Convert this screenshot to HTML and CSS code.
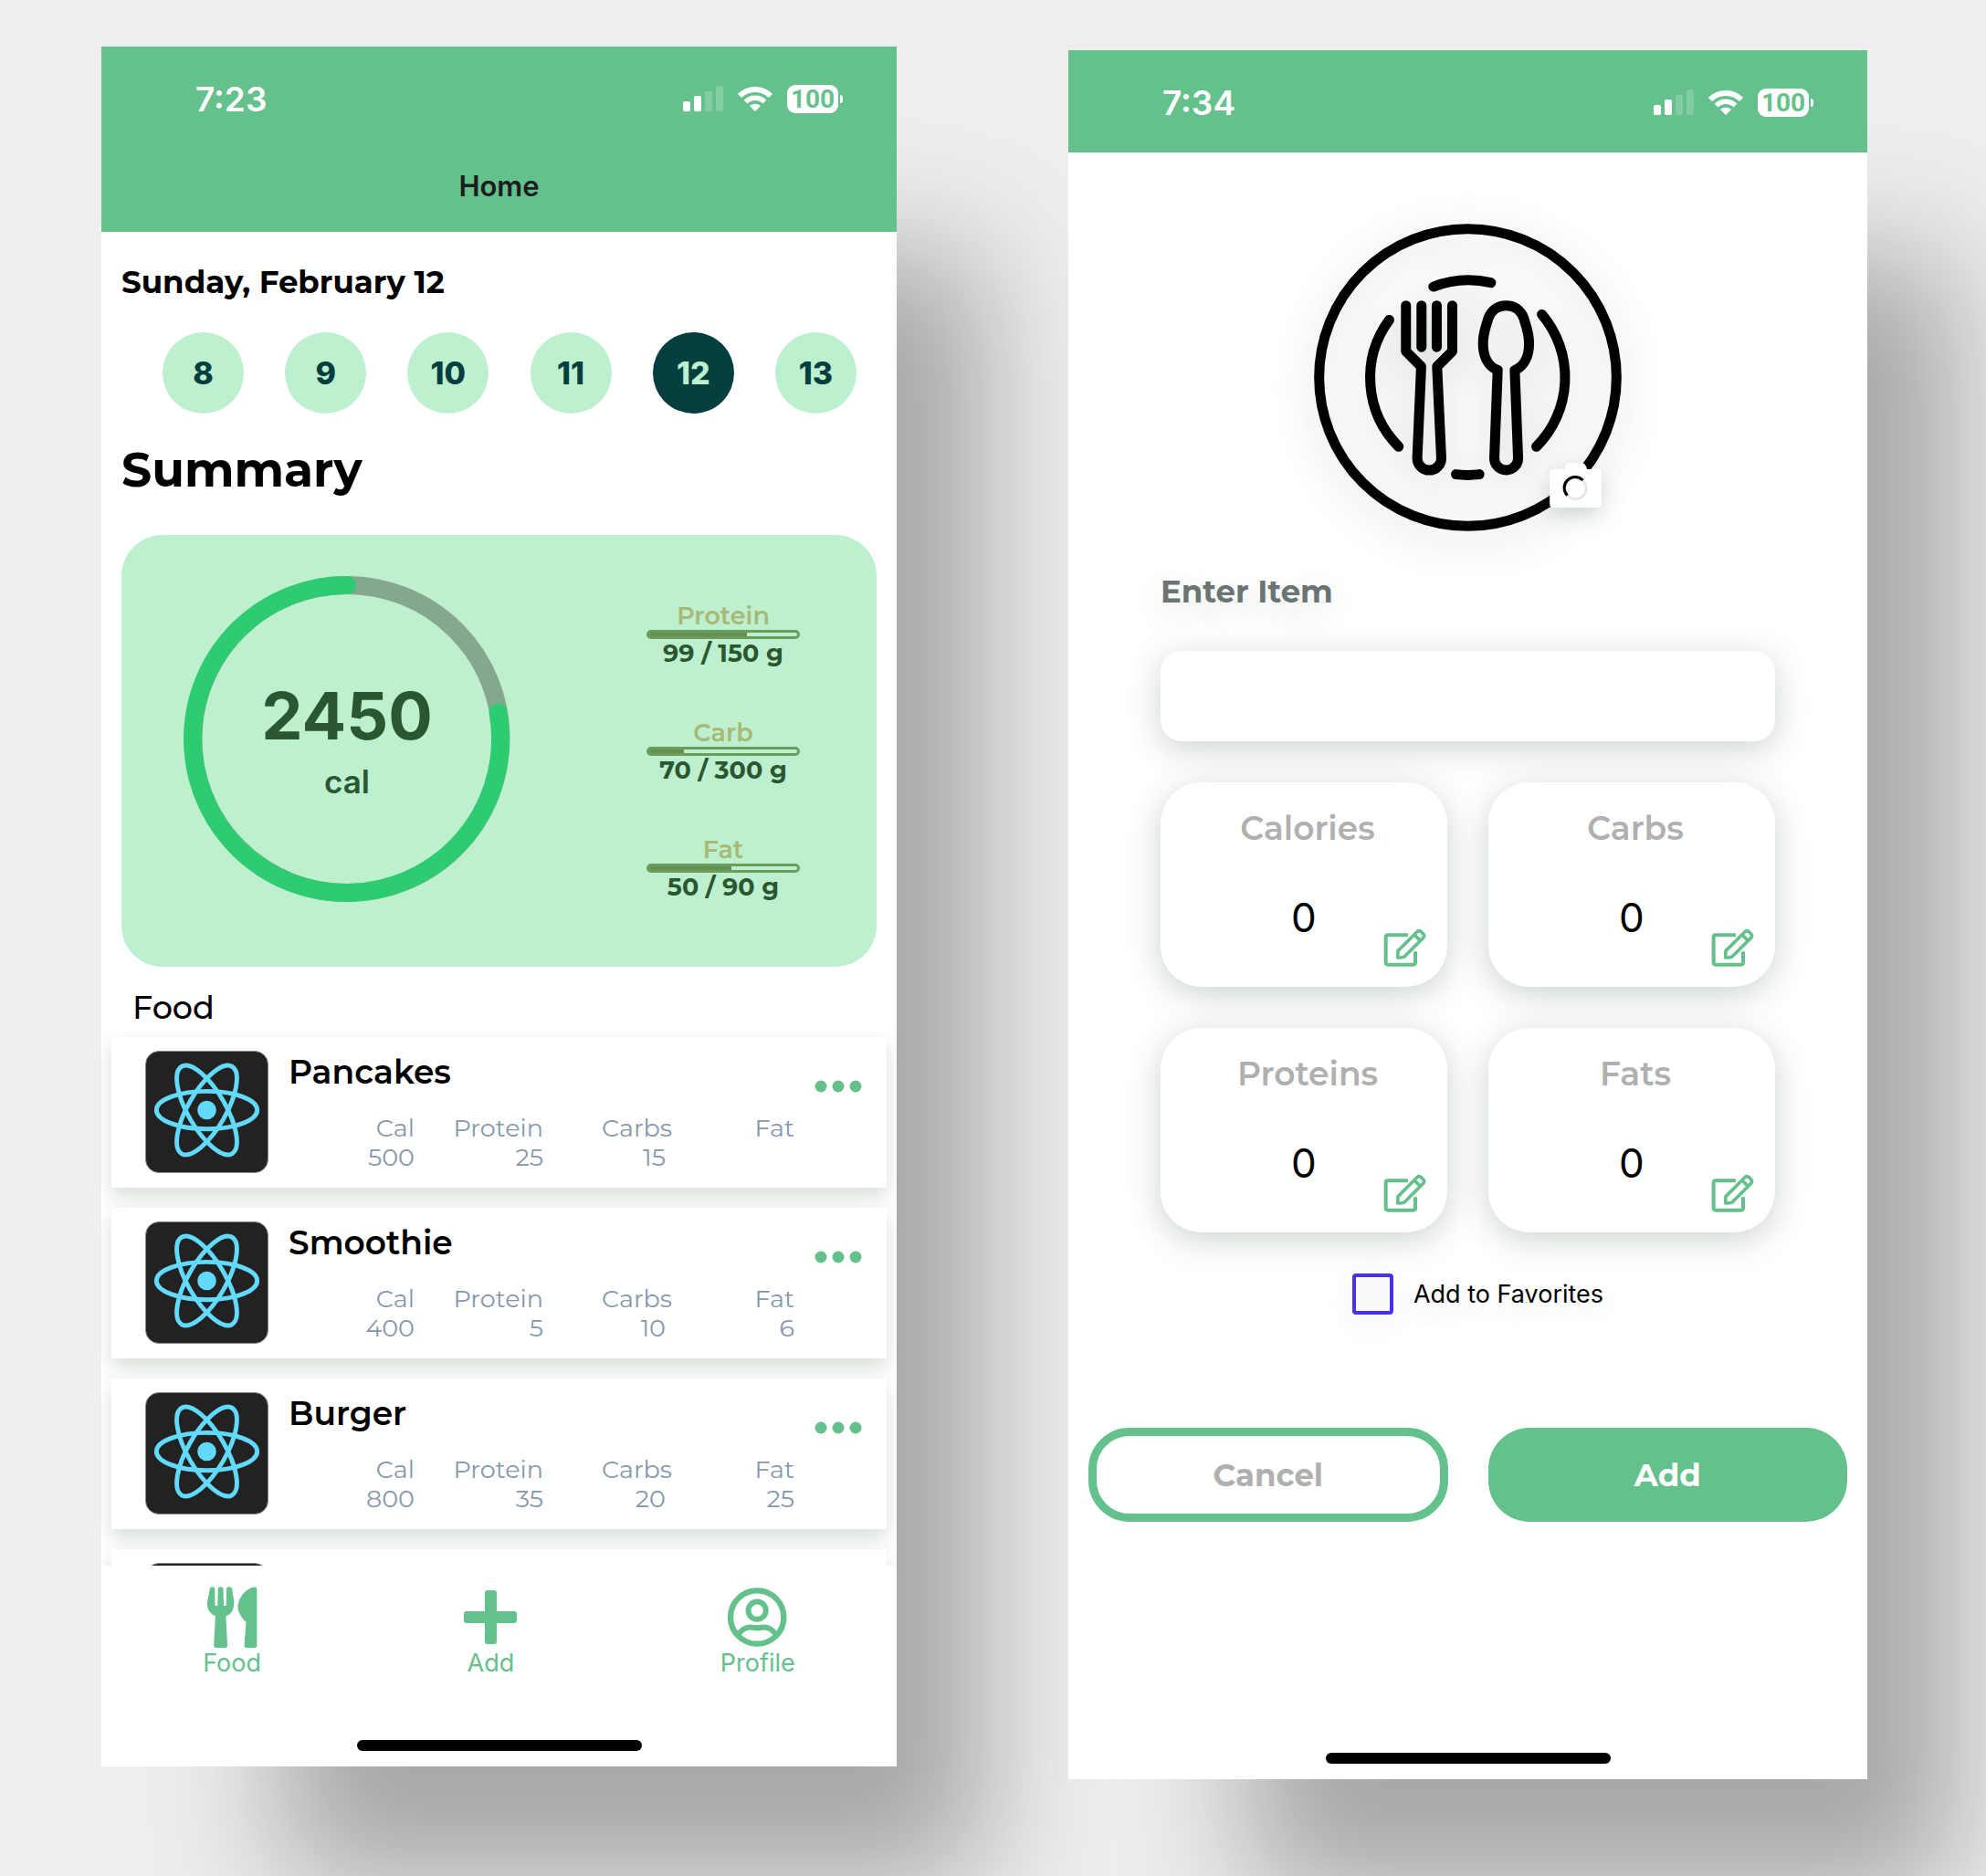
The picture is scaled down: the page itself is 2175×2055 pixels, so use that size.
FILE: index.html
```html
<!DOCTYPE html>
<html lang="en">
<head>
<meta charset="utf-8">
<meta name="viewport" content="width=device-width, initial-scale=1">
<title>Calorie tracker</title>
<link rel="stylesheet" href="styles.css">
</head>
<body>
<svg class="sprite" aria-hidden="true">
  <symbol id="signal" viewBox="0 0 44 28">
    <rect x="0" y="17" width="8" height="11" rx="2"/>
    <rect x="12" y="11" width="8" height="17" rx="2"/>
    <rect x="24" y="6" width="8" height="22" rx="2" opacity=".2"/>
    <rect x="36" y="0" width="8" height="28" rx="2" opacity=".2"/>
  </symbol>
  <symbol id="wifi" viewBox="0 0 38 28">
    <path d="M2 11A24 24 0 0 1 36 11" fill="none" stroke="currentColor" stroke-width="6"/>
    <path d="M8.5 17.5A14.800 14.800 0 0 1 29.500 17.500" fill="none" stroke="currentColor" stroke-width="5.500"/>
    <path d="M19 28L13 22A9 9 0 0 1 25 22Z"/>
  </symbol>
  <symbol id="react" viewBox="0 0 134 134">
    <g fill="none" stroke="#61dafb" stroke-width="5">
      <ellipse cx="67" cy="65" rx="56" ry="21"/>
      <ellipse cx="67" cy="65" rx="56" ry="21" transform="rotate(60 67 65)"/>
      <ellipse cx="67" cy="65" rx="56" ry="21" transform="rotate(120 67 65)"/>
    </g>
    <circle cx="67" cy="65" r="10.500" fill="#61dafb"/>
  </symbol>
  <symbol id="dots" viewBox="0 0 52 14">
    <circle cx="7" cy="7" r="6.500"/><circle cx="26" cy="7" r="6.500"/><circle cx="45" cy="7" r="6.500"/>
  </symbol>
  <symbol id="edit" viewBox="107 84 141 126">
    <g fill="none" stroke="currentColor" stroke-width="12" stroke-linejoin="round">
      <path d="M188 106H122Q115 106 115 113V196Q115 203 122 203H205Q212 203 212 196V160"/>
      <path stroke-width="11" d="M154 180L155 158L217 96Q224 88 231 95L238 102Q244 109 237 116L176 177Q171 180 154 180ZM208 104L228 124"/>
    </g>
  </symbol>
</svg>

<main class="board">
  <section class="phone phone--home" aria-label="Home">
    <header class="topbar">
      <div class="status">
        <span class="status__time">7:23</span>
        <svg class="status__signal"><use href="#signal"/></svg>
        <svg class="status__wifi"><use href="#wifi"/></svg>
        <span class="battery">100</span>
      </div>
      <h1 class="topbar__title">Home</h1>
    </header>

    <div class="home">
      <h2 class="date">Sunday, February 12</h2>
      <div class="days">
        <button class="day">8</button>
        <button class="day">9</button>
        <button class="day">10</button>
        <button class="day">11</button>
        <button class="day day--active">12</button>
        <button class="day">13</button>
      </div>
      <h2 class="heading">Summary</h2>
      <div class="summary">
        <div class="ring">
          <svg class="ring__chart" viewBox="0 0 358 358">
            <circle cx="179" cy="179" r="169" fill="none" stroke="#86a78f" stroke-width="20"/>
            <path d="M345 150A169 169 0 1 1 179 10" fill="none" stroke="#2ecc71" stroke-width="20" stroke-linecap="round"/>
          </svg>
          <div class="ring__text">
            <span class="ring__value">2450</span>
            <span class="ring__unit">cal</span>
          </div>
        </div>
        <div class="macros">
          <div class="macro">
            <label class="macro__name" for="m-protein">Protein</label>
            <progress class="macro__bar" id="m-protein" value="99" max="150"></progress>
            <span class="macro__value">99 / 150 g</span>
          </div>
          <div class="macro">
            <label class="macro__name" for="m-carb">Carb</label>
            <progress class="macro__bar" id="m-carb" value="70" max="300"></progress>
            <span class="macro__value">70 / 300 g</span>
          </div>
          <div class="macro">
            <label class="macro__name" for="m-fat">Fat</label>
            <progress class="macro__bar" id="m-fat" value="50" max="90"></progress>
            <span class="macro__value">50 / 90 g</span>
          </div>
        </div>
      </div>
      <h2 class="food-heading">Food</h2>
    </div>

    <div class="foods">
      <article class="food">
        <svg class="food__image"><use href="#react"/></svg>
        <div class="food__body">
          <h3 class="food__name">Pancakes</h3>
          <dl class="stats">
            <div><dt>Cal</dt><dd>500</dd></div>
            <div><dt>Protein</dt><dd>25</dd></div>
            <div><dt>Carbs</dt><dd class="stats__carbs">15</dd></div>
            <div><dt>Fat</dt><dd></dd></div>
          </dl>
        </div>
        <button class="food__more" aria-label="More options for Pancakes"><svg><use href="#dots"/></svg></button>
      </article>
      <article class="food">
        <svg class="food__image"><use href="#react"/></svg>
        <div class="food__body">
          <h3 class="food__name">Smoothie</h3>
          <dl class="stats">
            <div><dt>Cal</dt><dd>400</dd></div>
            <div><dt>Protein</dt><dd>5</dd></div>
            <div><dt>Carbs</dt><dd class="stats__carbs">10</dd></div>
            <div><dt>Fat</dt><dd>6</dd></div>
          </dl>
        </div>
        <button class="food__more" aria-label="More options for Smoothie"><svg><use href="#dots"/></svg></button>
      </article>
      <article class="food">
        <svg class="food__image"><use href="#react"/></svg>
        <div class="food__body">
          <h3 class="food__name">Burger</h3>
          <dl class="stats">
            <div><dt>Cal</dt><dd>800</dd></div>
            <div><dt>Protein</dt><dd>35</dd></div>
            <div><dt>Carbs</dt><dd class="stats__carbs">20</dd></div>
            <div><dt>Fat</dt><dd>25</dd></div>
          </dl>
        </div>
        <button class="food__more" aria-label="More options for Burger"><svg><use href="#dots"/></svg></button>
      </article>
      <article class="food">
        <svg class="food__image"><use href="#react"/></svg>
      </article>
    </div>

    <footer class="bottom">
      <nav class="tabs">
        <a class="tab" href="#food">
          <svg class="tab__icon" viewBox="30 40 203 203">
            <path d="M57 46Q58 41 65 41Q73 41 73 46L74 104H82L84 46Q84 41 92 41Q101 41 101 46L103 104H111L112 46Q112 41 121 41Q129 41 130 46L137 90Q139 128 110 138L115 236Q115 243 108 243H77Q70 243 70 236L75 138Q46 126 48 92Z"/>
            <path d="M213 48V236Q213 243 206 243H178Q171 243 171 236L177 158Q150 132 149 105Q155 62 195 43Q213 38 213 48Z"/>
          </svg>
          Food
        </a>
        <a class="tab" href="#add">
          <svg class="tab__icon tab__icon--add" viewBox="0 0 58 67">
            <rect x="23" y="4" width="13" height="59" rx="3"/><rect x="0" y="27" width="58" height="13" rx="3"/>
          </svg>
          Add
        </a>
        <a class="tab" href="#profile">
          <svg class="tab__icon" viewBox="80 41 202 202">
            <g fill="none" stroke="currentColor">
              <circle cx="180" cy="142" r="88" stroke-width="19"/>
              <circle cx="180" cy="120" r="29" stroke-width="18"/>
              <path d="M118 198Q140 170 165 176Q180 179 195 176Q220 170 242 198" stroke-width="18"/>
            </g>
          </svg>
          Profile
        </a>
      </nav>
      <div class="indicator"></div>
    </footer>
  </section>

  <section class="phone phone--add" aria-label="Add item">
    <header class="topbar">
      <div class="status">
        <span class="status__time">7:34</span>
        <svg class="status__signal"><use href="#signal"/></svg>
        <svg class="status__wifi"><use href="#wifi"/></svg>
        <span class="battery">100</span>
      </div>
    </header>

    <form class="entry">
      <div class="photo">
        <svg class="photo__plate" viewBox="120 77 1010 1010">
          <g fill="none" stroke="#000" stroke-width="33" stroke-linecap="round" stroke-linejoin="round">
            <circle cx="625" cy="582" r="488"/>
            <path d="M512 284A320 320 0 0 1 701 271"/>
            <path d="M367 393A320 320 0 0 0 398 809"/>
            <path d="M868 375A320 320 0 0 1 850 809"/>
            <path d="M586 900A320 320 0 0 0 663 900"/>
            <path d="M422 346V496L472 546L459 847A39 39 0 0 0 538 847L524 546L574 496V346M473 346V482M523 346V482"/>
            <path d="M723 558C690 545 675 510 675 470C675 435 685 415 692 388C702 360 725 346 751 346C777 346 799 360 809 388C816 415 826 435 826 470C826 510 811 545 779 558L790 847A39 39 0 0 1 712 847Z"/>
          </g>
        </svg>
        <button class="photo__camera" type="button" aria-label="Choose photo">
          <svg viewBox="891 861 170 147">
            <path fill="#fff" d="M903 882H938Q944 861 956 861H996Q1008 861 1014 882H1049Q1061 882 1061 894V996Q1061 1008 1049 1008H903Q891 1008 891 996V894Q891 882 903 882Z"/>
            <circle cx="976" cy="945" r="35" fill="none" stroke="#e2e7e2" stroke-width="8"/>
            <path d="M949 968A35 35 0 0 1 1000 918" fill="none" stroke="#000" stroke-width="9"/>
          </svg>
        </button>
      </div>

      <label class="entry__label" for="item">Enter Item</label>
      <input class="entry__input" id="item" type="text">

      <div class="nutrients">
        <div class="nutrient">
          <span class="nutrient__name">Calories</span>
          <span class="nutrient__value">0</span>
          <button class="nutrient__edit" type="button" aria-label="Edit calories"><svg><use href="#edit"/></svg></button>
        </div>
        <div class="nutrient">
          <span class="nutrient__name">Carbs</span>
          <span class="nutrient__value">0</span>
          <button class="nutrient__edit" type="button" aria-label="Edit carbs"><svg><use href="#edit"/></svg></button>
        </div>
        <div class="nutrient">
          <span class="nutrient__name">Proteins</span>
          <span class="nutrient__value">0</span>
          <button class="nutrient__edit" type="button" aria-label="Edit proteins"><svg><use href="#edit"/></svg></button>
        </div>
        <div class="nutrient">
          <span class="nutrient__name">Fats</span>
          <span class="nutrient__value">0</span>
          <button class="nutrient__edit" type="button" aria-label="Edit fats"><svg><use href="#edit"/></svg></button>
        </div>
      </div>

      <div class="favorite">
        <input class="favorite__box" id="favorite" type="checkbox">
        <label for="favorite">Add to Favorites</label>
      </div>

      <div class="actions">
        <button class="action action--cancel" type="button">Cancel</button>
        <button class="action action--add" type="submit">Add</button>
      </div>
    </form>
    <div class="indicator"></div>
  </section>
</main>
</body>
</html>
```
FILE: styles.css
```css
*,
*::before,
*::after {
  box-sizing: border-box;
}

:root {
  --green: #65c18c;
  --mint: #bdf0ce;
  --deep: #043e3f;
  --forest: #2a5730;
  --soft-shadow: 0 8px 36px rgba(40, 75, 45, 0.24);
}

body {
  margin: 0;
  background: #eee;
  color: #000;
  font-family: Montserrat, Inter, "Liberation Sans", sans-serif;
}

h1, h2, h3, dl, dd {
  margin: 0;
}

button {
  padding: 0;
  border: 0;
  background: none;
  color: inherit;
  font: inherit;
  cursor: pointer;
}

.sprite {
  display: none;
}

svg {
  display: block;
  fill: currentColor;
}

.board {
  display: flex;
  align-items: flex-start;
  gap: 188px;
  min-height: 100vh;
  padding: 51px 130px 51px 111px;
  overflow: hidden;
}

.phone {
  display: flex;
  flex-direction: column;
  min-width: 0;
  min-height: 0;
  background: #fff;
  box-shadow: 146px 178px 130px -50px rgba(0, 0, 0, 0.3);
}

.phone--home {
  flex: 871 1 0;
  aspect-ratio: 871 / 1884;
}

.phone--add {
  flex: 875 1 0;
  aspect-ratio: 875 / 1894;
  margin-top: 4px;
}

/* Status bar and title */

.topbar {
  background: var(--green);
}

.status {
  display: flex;
  align-items: center;
  gap: 16px;
  height: 112px;
  padding: 2px 64px 0 103px;
  color: #fff;
  font-family: Inter, sans-serif;
}

.status__time {
  margin-right: auto;
  font-size: 37px;
  font-weight: 600;
}

.status__signal {
  width: 44px;
  height: 28px;
}

.status__wifi {
  width: 38px;
  height: 28px;
}

.battery {
  position: relative;
  width: 56px;
  height: 31px;
  border-radius: 9px;
  background: #fff;
  color: var(--green);
  font-family: Roboto, sans-serif;
  font-size: 28px;
  font-weight: 700;
  line-height: 32px;
  text-align: center;
}

.battery::after {
  content: "";
  position: absolute;
  top: 11px;
  left: 58px;
  width: 3px;
  height: 9px;
  border-radius: 0 3px 3px 0;
  background: #fff;
}

.topbar__title {
  height: 91px;
  color: #1c1c1e;
  font-family: Inter, sans-serif;
  font-size: 31px;
  font-weight: 600;
  line-height: 82px;
  text-align: center;
}

/* Home */

.home {
  padding: 33px 22px 0;
}

.date {
  font-size: 34px;
  font-weight: 700;
  line-height: 44px;
}

.days {
  display: flex;
  justify-content: space-between;
  padding: 33px 22px 0 45px;
}

.day {
  width: 89px;
  height: 89px;
  border-radius: 50%;
  background: var(--mint);
  color: var(--deep);
  font-family: Inter, sans-serif;
  font-size: 34px;
  font-weight: 800;
}

.day--active {
  background: var(--deep);
  color: var(--mint);
}

.heading {
  margin: 30px 0 39px;
  font-size: 52px;
  font-weight: 700;
  line-height: 64px;
}

.summary {
  display: flex;
  justify-content: space-between;
  padding: 45px 84px 71px 68px;
  border-radius: 45px;
  background: var(--mint);
  color: var(--forest);
}

.ring {
  display: grid;
}

.ring__chart,
.ring__text {
  grid-area: 1 / 1;
}

.ring__chart {
  width: 358px;
  height: 357px;
}

.ring__text {
  display: flex;
  flex-direction: column;
  justify-content: center;
  gap: 8px;
  padding-top: 4px;
  font-family: Inter, sans-serif;
  text-align: center;
}

.ring__value {
  font-size: 72px;
  font-weight: 700;
  line-height: 80px;
}

.ring__unit {
  font-size: 35px;
  font-weight: 600;
  line-height: 48px;
}

.macros {
  display: flex;
  flex-direction: column;
  align-self: flex-end;
  gap: 56px;
}

.macro {
  display: flex;
  flex-direction: column;
  align-items: center;
  font-size: 27px;
}

.macro__name {
  color: #a8b877;
  font-weight: 600;
  line-height: 30px;
}

.macro__bar {
  width: 168px;
  height: 10px;
  border: 3px solid #6c9c5b;
  border-radius: 5px;
  background: transparent;
  overflow: hidden;
  appearance: none;
}

.macro__bar::-webkit-progress-bar {
  background: transparent;
}

.macro__bar::-webkit-progress-value {
  background: #638f50;
}

.macro__value {
  font-weight: 700;
  line-height: 32px;
}

.food-heading {
  margin-top: 23px;
  padding-left: 12px;
  font-size: 35px;
  font-weight: 500;
  line-height: 44px;
}

/* Food list */

.foods {
  display: flex;
  flex: 1;
  flex-direction: column;
  gap: 22px;
  min-height: 0;
  padding: 10px 11px 0;
  overflow-y: auto;
  scrollbar-width: none;
}

.food {
  display: flex;
  flex-shrink: 0;
  gap: 22px;
  padding: 15px 27px 16px 37px;
  background: #fff;
  box-shadow: 0 10px 20px rgba(40, 75, 45, 0.18);
}

.food__image {
  flex-shrink: 0;
  width: 135px;
  height: 134px;
  border: 1px solid #888;
  border-radius: 15px;
  background: #222;
}

.food__body {
  flex: 1;
}

.food__name {
  font-size: 36px;
  font-weight: 600;
  line-height: 46px;
}

.stats {
  display: grid;
  grid-template-columns: 138fr 141fr 141fr 134fr;
  margin-top: 23px;
  color: #8698ab;
  font-size: 27px;
  line-height: 32px;
  text-align: right;
}

.stats__carbs {
  padding-right: 7px;
}

.food__more {
  align-self: flex-start;
  padding-top: 32px;
  color: var(--green);
}

.food__more svg {
  width: 52px;
  height: 14px;
}

/* Bottom tabs */

.bottom {
  display: flex;
  flex-direction: column;
  justify-content: space-between;
  height: 220px;
}

.tabs {
  display: flex;
  justify-content: space-around;
  padding-top: 23px;
}

.tab {
  display: flex;
  flex-direction: column;
  align-items: center;
  color: var(--green);
  font-family: Inter, sans-serif;
  font-size: 27px;
  line-height: 34px;
  text-decoration: none;
}

.tab__icon {
  width: 67px;
  height: 67px;
  margin: 0 -3px;
}

.tab__icon--add {
  width: 58px;
  margin: 0;
}

.indicator {
  flex-shrink: 0;
  align-self: center;
  width: 312px;
  height: 12px;
  margin-bottom: 17px;
  border-radius: 6px;
  background: #000;
}

/* Add item */

.entry {
  display: flex;
  flex: 1;
  flex-direction: column;
  padding: 78px 22px 0;
}

.photo {
  position: relative;
  align-self: center;
  width: 337px;
}

.photo__plate {
  width: 337px;
  height: 337px;
  overflow: visible;
  filter: drop-shadow(0 10px 22px rgba(40, 75, 45, 0.24));
}

.photo__camera {
  position: absolute;
  right: 22px;
  bottom: 26px;
  filter: drop-shadow(0 8px 12px rgba(40, 75, 45, 0.2));
}

.photo__camera svg {
  width: 57px;
  height: 49px;
}

.entry__label {
  margin: 44px 79px 43px;
  color: #6a7573;
  font-size: 34px;
  font-weight: 700;
  line-height: 44px;
  text-shadow: 0 10px 32px rgba(40, 75, 45, 0.16);
}

.entry__input {
  height: 99px;
  margin: 0 79px;
  padding: 0 24px;
  border: 0;
  border-radius: 23px;
  background: #fff;
  box-shadow: var(--soft-shadow);
  font: inherit;
  font-size: 34px;
}

.nutrients {
  display: grid;
  grid-template-columns: 1fr 1fr;
  gap: 45px;
  margin: 45px 79px;
}

.nutrient {
  display: grid;
  grid-template-rows: 44px 1fr;
  height: 224px;
  padding: 28px 23px 22px;
  border-radius: 45px;
  background: #fff;
  box-shadow: var(--soft-shadow);
  text-align: center;
}

.nutrient__name {
  padding-left: 8px;
  color: #b0b0b0;
  font-size: 36px;
  font-weight: 600;
  line-height: 44px;
}

.nutrient__value {
  grid-area: 2 / 1;
  padding-top: 48px;
  font-family: Inter, sans-serif;
  font-size: 44px;
  line-height: 56px;
}

.nutrient__edit {
  grid-area: 2 / 1;
  place-self: end;
  color: var(--green);
}

.nutrient__edit svg {
  width: 47px;
  height: 42px;
}

.favorite {
  display: flex;
  align-items: center;
  align-self: center;
  gap: 22px;
  padding-left: 22px;
  font-family: Inter, sans-serif;
  font-size: 27px;
  text-shadow: 0 10px 32px rgba(40, 75, 45, 0.16);
}

.favorite__box {
  width: 45px;
  height: 45px;
  margin: 0;
  border: 4px solid #4630eb;
  border-radius: 4px;
  background: #fafafa;
  box-shadow: 0 10px 32px rgba(40, 75, 45, 0.06);
  appearance: none;
}

.favorite__box:checked {
  background: #4630eb;
}

.actions {
  display: grid;
  grid-template-columns: 1fr 1fr;
  gap: 44px;
  margin-top: 124px;
}

.action {
  height: 103px;
  border-radius: 45px;
  font-size: 34px;
  font-weight: 700;
}

.action--cancel {
  border: 9px solid var(--green);
  color: #b0b0b0;
}

.action--add {
  background: var(--green);
  color: #fff;
}
```
